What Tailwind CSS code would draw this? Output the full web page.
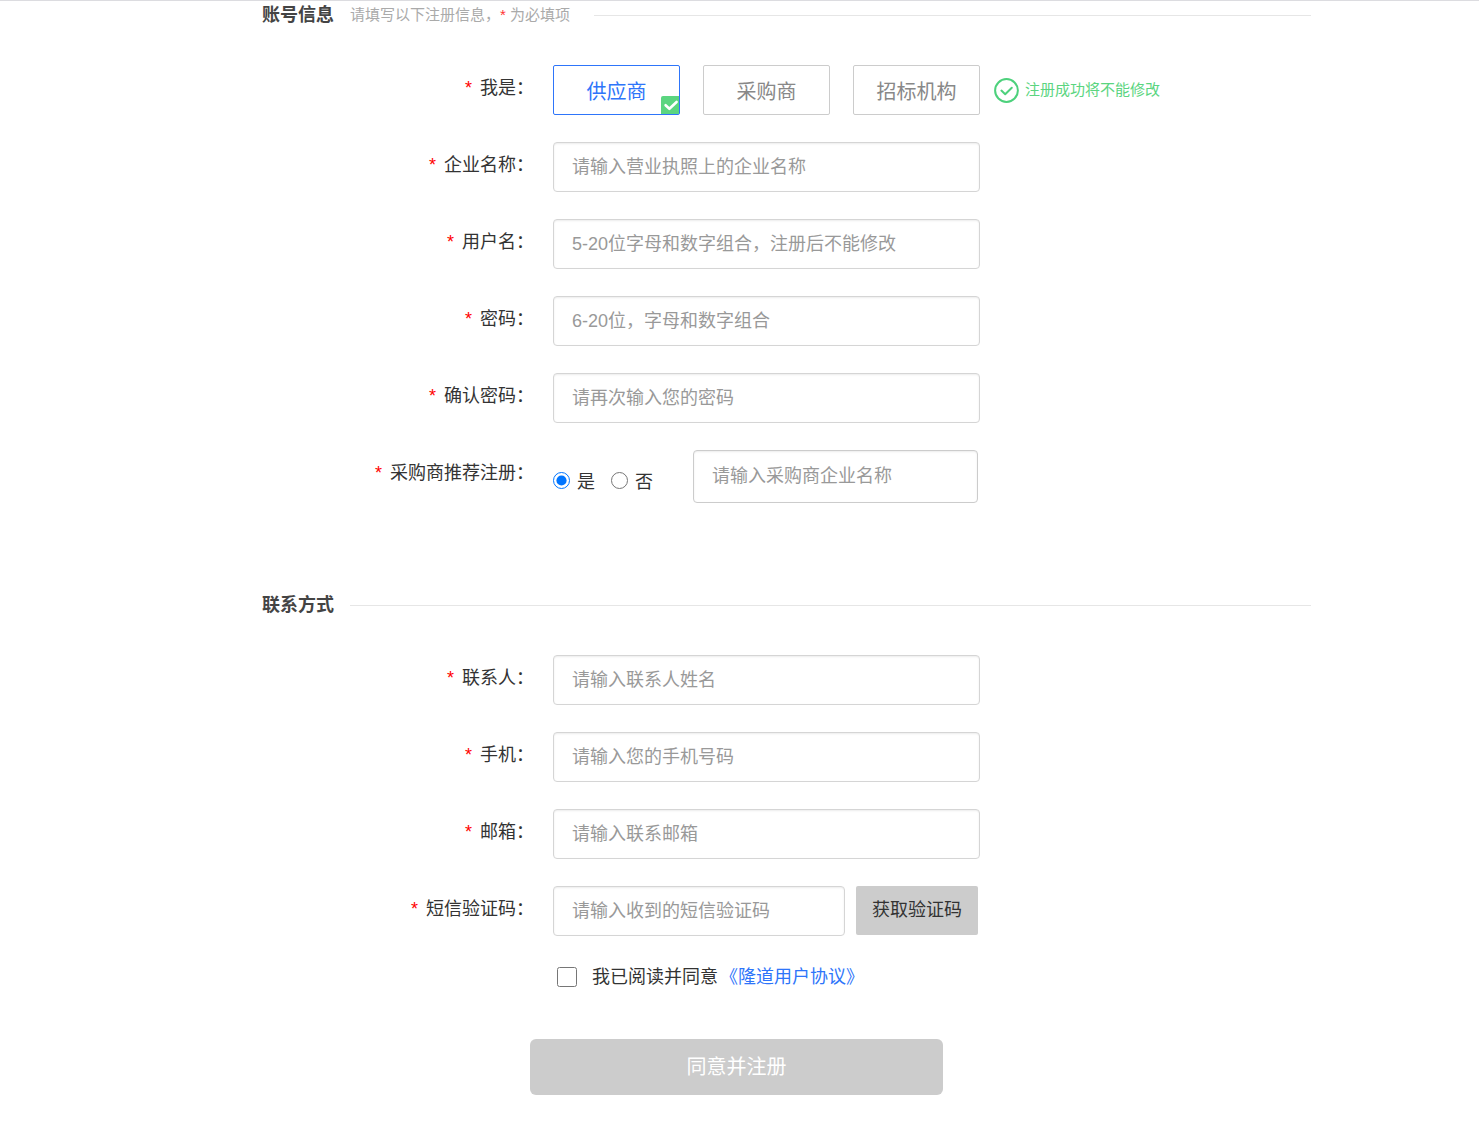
<!DOCTYPE html>
<html lang="zh-CN">
<head>
<meta charset="utf-8">
<meta name="viewport" content="width=device-width, initial-scale=1">
<title>用户注册</title>
<script src="https://cdn.jsdelivr.net/npm/@tailwindcss/browser@4"></script>
</head>
<body class="bg-white text-[18px] text-[#333] font-['Liberation_Sans','Noto_Sans_CJK_SC',sans-serif]">
<main class="border-t border-[#dcdce0]">
  <form class="mx-auto max-w-[1143px] pl-[94px] pb-8">

    <section>
      <div class="flex h-7 items-center">
        <h2 class="font-bold leading-6 text-[#444]">账号信息</h2>
        <p class="ml-4 text-[15px] leading-6 text-[#aaa]">请填写以下注册信息，<span class="text-[#f33]">*</span> 为必填项</p>
        <div class="ml-6 h-px flex-1 bg-[#e6e6e6]"></div>
      </div>

      <div class="mt-9 grid grid-cols-[272px_1fr] items-start gap-x-[19px] gap-y-[27px]">
        <span id="role-label" class="text-right leading-[46px]"><span class="mr-2 text-[#f00]">*</span>我是：</span>
        <div class="flex items-center" role="group" aria-labelledby="role-label">
          <div class="flex gap-[23px] text-[20px]">
            <button type="button" aria-pressed="true" class="relative h-[50px] w-[127px] rounded-xs border border-[#2e75fa] pt-1 text-[#2e75fa]">供应商
              <svg class="absolute right-0 bottom-0 h-[18px] w-[18px]" viewBox="0 0 18 18" aria-hidden="true"><path d="M2 0H18V18H0V2Q0 0 2 0Z" fill="#5bd580"/><path d="M4.6 9.2L8.4 12.8L15.6 6" fill="none" stroke="#fff" stroke-width="2.6" stroke-linecap="round" stroke-linejoin="round"/></svg>
            </button>
            <button type="button" aria-pressed="false" class="h-[50px] w-[127px] rounded-xs border border-[#ccc] pt-1 text-[#888]">采购商</button>
            <button type="button" aria-pressed="false" class="h-[50px] w-[127px] rounded-xs border border-[#ccc] pt-1 text-[#888]">招标机构</button>
          </div>
          <svg class="ml-[14px] h-[25px] w-[25px]" viewBox="0 0 25 25" fill="none" stroke="#4dd17c" aria-hidden="true"><circle cx="12.5" cy="12.5" r="11.4" stroke-width="2"/><path d="M7.4 12.6L11.2 16.2L17.8 9.8" stroke-width="2" stroke-linecap="round" stroke-linejoin="round"/></svg>
          <span class="ml-[6px] text-[15px] text-[#5bd580]">注册成功将不能修改</span>
        </div>

        <label for="company" class="text-right leading-[46px]"><span class="mr-2 text-[#f00]">*</span>企业名称：</label>
        <input id="company" type="text" placeholder="请输入营业执照上的企业名称" class="h-[50px] w-[427px] rounded-sm border border-[#d5d5d5] px-[18px] shadow-[inset_0_1px_2px_rgba(0,0,0,0.08)] placeholder:text-[#999]">

        <label for="username" class="text-right leading-[46px]"><span class="mr-2 text-[#f00]">*</span>用户名：</label>
        <input id="username" type="text" placeholder="5-20位字母和数字组合，注册后不能修改" class="h-[50px] w-[427px] rounded-sm border border-[#d5d5d5] px-[18px] shadow-[inset_0_1px_2px_rgba(0,0,0,0.08)] placeholder:text-[#999]">

        <label for="password" class="text-right leading-[46px]"><span class="mr-2 text-[#f00]">*</span>密码：</label>
        <input id="password" type="password" placeholder="6-20位，字母和数字组合" class="h-[50px] w-[427px] rounded-sm border border-[#d5d5d5] px-[18px] shadow-[inset_0_1px_2px_rgba(0,0,0,0.08)] placeholder:text-[#999]">

        <label for="confirm" class="text-right leading-[46px]"><span class="mr-2 text-[#f00]">*</span>确认密码：</label>
        <input id="confirm" type="password" placeholder="请再次输入您的密码" class="h-[50px] w-[427px] rounded-sm border border-[#d5d5d5] px-[18px] shadow-[inset_0_1px_2px_rgba(0,0,0,0.08)] placeholder:text-[#999]">

        <span id="referral-label" class="text-right leading-[46px]"><span class="mr-2 text-[#f00]">*</span>采购商推荐注册：</span>
        <div class="flex items-center" role="group" aria-labelledby="referral-label">
          <div class="flex items-center gap-4 pt-2">
            <label class="flex items-center gap-[7px]"><input type="radio" name="referral" checked class="h-[17px] w-[17px]"><span class="pt-1">是</span></label>
            <label class="flex items-center gap-[7px]"><input type="radio" name="referral" class="h-[17px] w-[17px]"><span class="pt-1">否</span></label>
          </div>
          <input type="text" aria-label="采购商企业名称" placeholder="请输入采购商企业名称" class="ml-10 h-[53px] w-[285px] rounded-sm border border-[#ccc] px-[18px] shadow-[inset_0_1px_2px_rgba(0,0,0,0.08)] placeholder:text-[#999]">
        </div>
      </div>
    </section>

    <section class="mt-[88px]">
      <div class="flex h-7 items-center">
        <h2 class="font-bold leading-6 text-[#444]">联系方式</h2>
        <div class="ml-4 h-px flex-1 bg-[#e6e6e6]"></div>
      </div>

      <div class="mt-9 grid grid-cols-[272px_1fr] items-start gap-x-[19px] gap-y-[27px]">
        <label for="contact" class="text-right leading-[46px]"><span class="mr-2 text-[#f00]">*</span>联系人：</label>
        <input id="contact" type="text" placeholder="请输入联系人姓名" class="h-[50px] w-[427px] rounded-sm border border-[#d5d5d5] px-[18px] shadow-[inset_0_1px_2px_rgba(0,0,0,0.08)] placeholder:text-[#999]">

        <label for="mobile" class="text-right leading-[46px]"><span class="mr-2 text-[#f00]">*</span>手机：</label>
        <input id="mobile" type="tel" placeholder="请输入您的手机号码" class="h-[50px] w-[427px] rounded-sm border border-[#d5d5d5] px-[18px] shadow-[inset_0_1px_2px_rgba(0,0,0,0.08)] placeholder:text-[#999]">

        <label for="email" class="text-right leading-[46px]"><span class="mr-2 text-[#f00]">*</span>邮箱：</label>
        <input id="email" type="email" placeholder="请输入联系邮箱" class="h-[50px] w-[427px] rounded-sm border border-[#d5d5d5] px-[18px] shadow-[inset_0_1px_2px_rgba(0,0,0,0.08)] placeholder:text-[#999]">

        <label for="code" class="text-right leading-[46px]"><span class="mr-2 text-[#f00]">*</span>短信验证码：</label>
        <div class="flex items-start gap-[11px]">
          <input id="code" type="text" placeholder="请输入收到的短信验证码" class="h-[50px] w-[292px] rounded-sm border border-[#d5d5d5] px-[18px] shadow-[inset_0_1px_2px_rgba(0,0,0,0.08)] placeholder:text-[#999]">
          <button type="button" class="h-[49px] w-[122px] rounded-xs bg-[#ccc]">获取验证码</button>
        </div>

        <div class="col-start-2 flex h-7 items-center pl-1">
          <input id="agree" type="checkbox" class="h-5 w-5">
          <label for="agree" class="ml-[15px]">我已阅读并同意</label>
          <a href="#" class="ml-[2px] text-[#2e75fa]">《隆道用户协议》</a>
        </div>
      </div>
    </section>

    <button type="submit" class="mt-12 ml-[268px] block h-14 w-[413px] rounded-md bg-[#ccc] text-[20px] text-white">同意并注册</button>
  </form>
</main>
</body>
</html>
